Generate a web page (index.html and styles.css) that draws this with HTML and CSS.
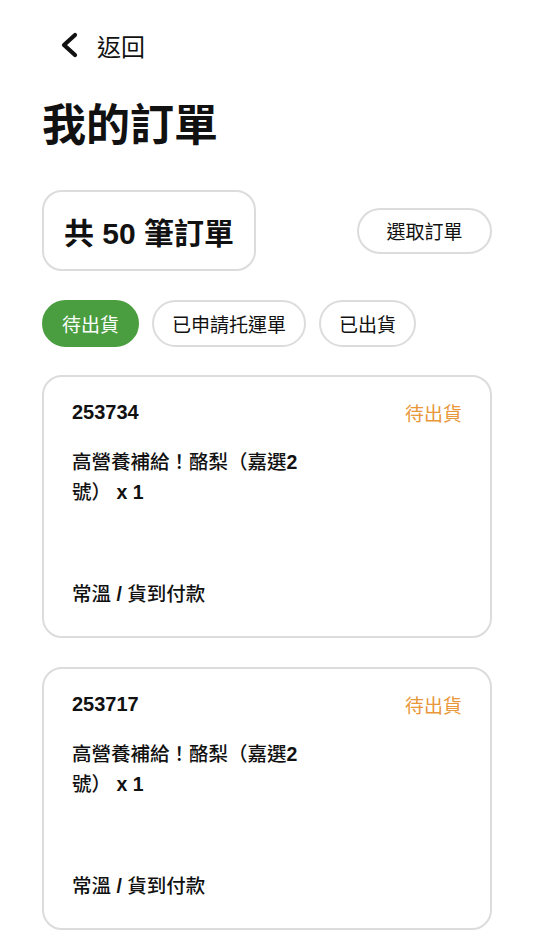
FILE: index.html
```html
<!DOCTYPE html>
<html lang="zh-Hant">
<head>
    <meta charset="UTF-8">
    <meta name="viewport" content="width=device-width, initial-scale=1.0">
    <title>我的訂單</title>
    <link rel="stylesheet" href="styles.css">
</head>
<body>
    <div class="page">
        <div class="back">
            <svg class="back-icon" viewBox="0 0 20 26" width="20" height="26">
                <path d="M16 3 L5 13 L16 23" fill="none" stroke="#111" stroke-width="4.2" stroke-linecap="round" stroke-linejoin="round"/>
            </svg>
            <span>返回</span>
        </div>

        <h1 class="title">我的訂單</h1>

        <div class="summary">
            <div class="count">共 50 筆訂單</div>
            <button class="select">選取訂單</button>
        </div>

        <div class="tabs">
            <button class="tab active">待出貨</button>
            <button class="tab">已申請托運單</button>
            <button class="tab">已出貨</button>
        </div>

        <div class="orders">
            <div class="card">
                <div class="card-head">
                    <span class="order-no">253734</span>
                    <span class="status">待出貨</span>
                </div>
                <div class="product">高營養補給！酪梨（嘉選<b>2</b>號） <b>x 1</b></div>
                <div class="meta">常溫 <b>/</b> 貨到付款</div>
            </div>
            <div class="card">
                <div class="card-head">
                    <span class="order-no">253717</span>
                    <span class="status">待出貨</span>
                </div>
                <div class="product">高營養補給！酪梨（嘉選<b>2</b>號） <b>x 1</b></div>
                <div class="meta">常溫 <b>/</b> 貨到付款</div>
            </div>
        </div>
    </div>
</body>
</html>
```

FILE: styles.css
```css
* {
    margin: 0px;
    padding: 0px;
    box-sizing: border-box;
}
body {
    background-color: white;
    color: #111;
    font-family: "Liberation Sans", "Noto Sans CJK TC", sans-serif;
}
.page {
    padding: 30px 42px 40px;
}
.back {
    display: flex;
    align-items: center;
    gap: 18px;
    height: 30px;
    margin-left: 17px;
    font-size: 24px;
    font-family: "Noto Sans CJK TC", sans-serif;
    font-weight: 400;
}
.back-icon {
    display: block;
}
.title {
    margin-top: 37px;
    font-size: 44px;
    line-height: 50px;
    font-weight: 700;
    font-family: "Noto Sans CJK TC", sans-serif;
}
.summary {
    margin-top: 43px;
    display: flex;
    justify-content: space-between;
    align-items: center;
}
.count {
    width: 214px;
    height: 81px;
    border: 2px solid #dcdcdc;
    border-radius: 20px;
    display: flex;
    align-items: center;
    justify-content: center;
    font-size: 30px;
    font-weight: 700;
}
button {
    font-family: "Noto Sans CJK TC", sans-serif;
    background-color: white;
    color: #111;
    cursor: pointer;
}
.select {
    width: 135px;
    height: 46px;
    border: 2px solid #dcdcdc;
    border-radius: 23px;
    font-size: 19px;
}
.tabs {
    margin-top: 29px;
    display: flex;
    gap: 13px;
}
.tab {
    height: 47px;
    padding: 0px 18px;
    border: 2px solid #dcdcdc;
    border-radius: 24px;
    font-size: 19px;
}
.tab.active {
    background-color: #4a9e3f;
    border-color: #4a9e3f;
    color: white;
}
.orders {
    margin-top: 28px;
    display: flex;
    flex-direction: column;
    gap: 29px;
}
.card {
    height: 263px;
    border: 2px solid #dcdcdc;
    border-radius: 20px;
    padding: 21px 28px 27px;
    display: flex;
    flex-direction: column;
}
.card-head {
    display: flex;
    justify-content: space-between;
    align-items: center;
    height: 28px;
}
.order-no {
    font-size: 20px;
    font-weight: 700;
}
.status {
    color: #e8973a;
    font-size: 19px;
    font-family: "Noto Sans CJK TC", sans-serif;
}
.product {
    margin-top: 21px;
    max-width: 240px;
    font-size: 19.5px;
    line-height: 30px;
    font-weight: 500;
}
.meta {
    margin-top: auto;
    font-size: 19.5px;
    line-height: 30px;
    font-weight: 500;
}
.product b,
.meta b {
    font-weight: 700;
}
```
